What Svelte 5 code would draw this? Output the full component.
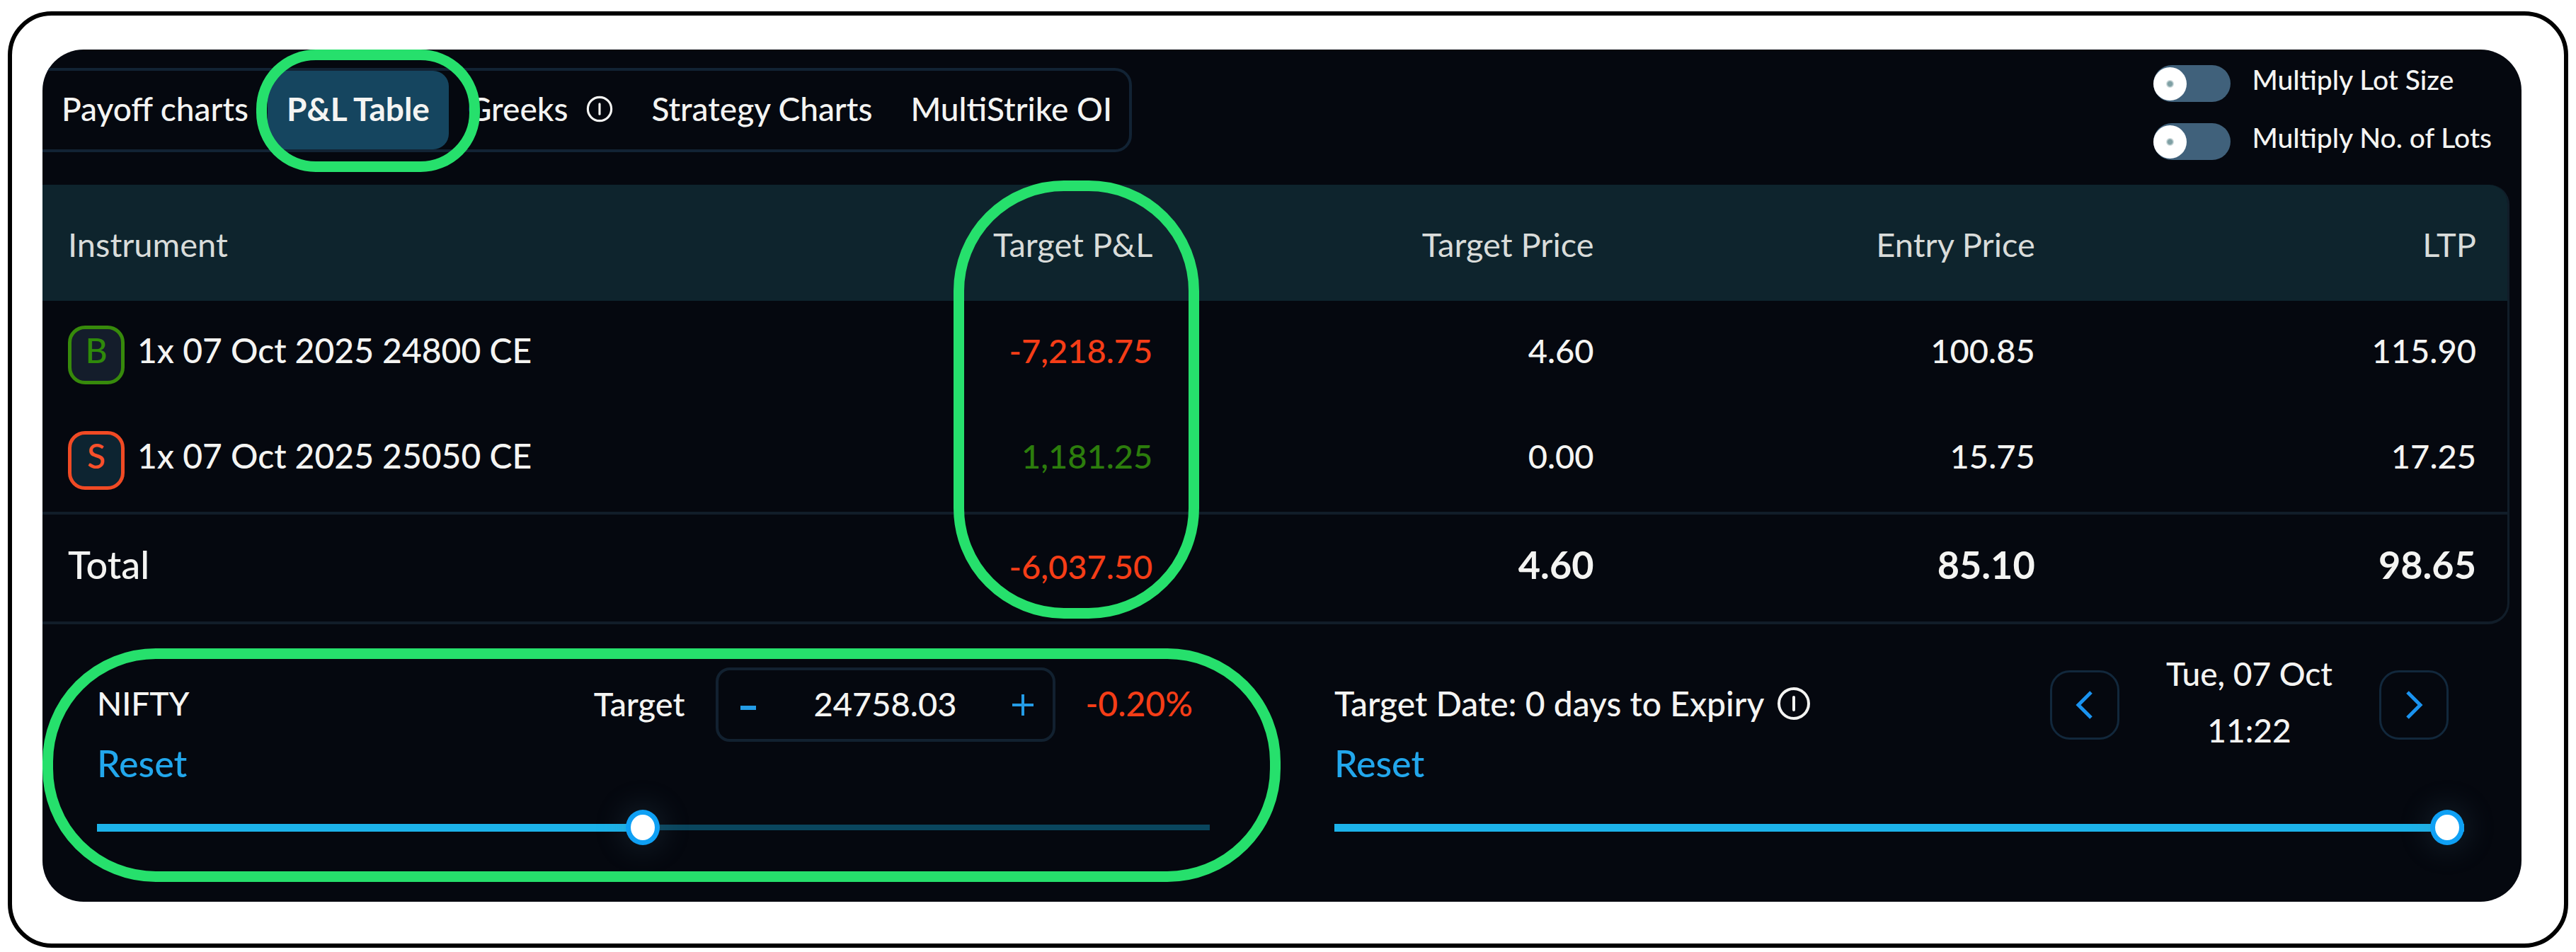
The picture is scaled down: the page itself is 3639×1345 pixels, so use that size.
<script>
	const tabs = [
		{ name: 'Payoff charts' },
		{ name: 'P&L Table' },
		{ name: 'Greeks', info: true },
		{ name: 'Strategy Charts' },
		{ name: 'MultiStrike OI' }
	];

	const legs = [
		{ side: 'B', name: '1x 07 Oct 2025 24800 CE', pnl: '-7,218.75', target: '4.60', entry: '100.85', ltp: '115.90' },
		{ side: 'S', name: '1x 07 Oct 2025 25050 CE', pnl: '1,181.25', target: '0.00', entry: '15.75', ltp: '17.25' }
	];

	let active = $state('P&L Table');
	let multiplyLotSize = $state(false);
	let multiplyLots = $state(false);
	let target = $state('24758.03');
	let spot = $state(49);
	let day = $state(100);

	function step(amount) {
		target = (Number(target) + amount).toFixed(2);
	}
</script>

{#snippet infoIcon()}
	<svg class="info" viewBox="0 0 24 24" aria-hidden="true">
		<circle cx="12" cy="12" r="10.5" />
		<path d="M12 7.5v9" />
	</svg>
{/snippet}

<main class="frame">
	<div class="panel">
		<header class="topbar">
			<nav class="tabs">
				{#each tabs as tab}
					<button class="tab" class:active={active === tab.name} onclick={() => (active = tab.name)}>
						{tab.name}
						{#if tab.info}{@render infoIcon()}{/if}
						{#if tab.name === 'P&L Table'}<span class="ring ring-tab"></span>{/if}
					</button>
				{/each}
			</nav>
			<div class="toggles">
				<label class="toggle">
					<input type="checkbox" bind:checked={multiplyLotSize}>
					<span>Multiply Lot Size</span>
				</label>
				<label class="toggle">
					<input type="checkbox" bind:checked={multiplyLots}>
					<span>Multiply No. of Lots</span>
				</label>
			</div>
		</header>

		<div class="table-wrap">
			<table>
				<thead>
					<tr>
						<th class="name" scope="col">Instrument</th>
						<th class="pnl" scope="col">Target P&amp;L<span class="ring ring-column"></span></th>
						<th scope="col">Target Price</th>
						<th scope="col">Entry Price</th>
						<th scope="col">LTP</th>
					</tr>
				</thead>
				<tbody>
					{#each legs as leg}
						<tr>
							<td class="name">
								<div class="leg">
									<span class="badge" class:sell={leg.side === 'S'}>{leg.side}</span>
									<span>{leg.name}</span>
								</div>
							</td>
							<td class={leg.pnl.startsWith('-') ? 'loss' : 'profit'}>{leg.pnl}</td>
							<td>{leg.target}</td>
							<td>{leg.entry}</td>
							<td>{leg.ltp}</td>
						</tr>
					{/each}
				</tbody>
				<tfoot>
					<tr>
						<td class="name total">Total</td>
						<td class="loss">-6,037.50</td>
						<td class="sum">4.60</td>
						<td class="sum">85.10</td>
						<td class="sum">98.65</td>
					</tr>
				</tfoot>
			</table>
		</div>

		<div class="controls">
			<section>
				<span class="ring ring-section"></span>
				<div class="row spot-row">
					<span class="text symbol">NIFTY</span>
					<div class="group">
						<label class="text" for="target">Target</label>
						<div class="stepper">
							<button aria-label="Decrease" onclick={() => step(-50)}>
								<svg viewBox="0 0 40 40"><path d="M9 24h22" stroke-width="6" /></svg>
							</button>
							<input id="target" type="text" bind:value={target}>
							<button aria-label="Increase" onclick={() => step(50)}>
								<svg viewBox="0 0 40 40"><path d="M5 20h30M20 5v30" stroke-width="4" /></svg>
							</button>
						</div>
						<span class="text change loss">-0.20%</span>
					</div>
				</div>
				<button class="reset" onclick={() => (spot = 49)}>Reset</button>
				<input class="slider" type="range" min="0" max="100" aria-label="Target price" bind:value={spot} style="--fill: {spot}%">
			</section>

			<section>
				<div class="row date-row">
					<span class="text label">Target Date: 0 days to Expiry {@render infoIcon()}</span>
					<div class="picker">
						<button class="arrow" aria-label="Previous">
							<svg viewBox="0 0 40 40"><path d="M29 2 11 20l18 18" stroke-width="5" /></svg>
						</button>
						<div class="date"><span>Tue, 07 Oct</span><span>11:22</span></div>
						<button class="arrow" aria-label="Next">
							<svg viewBox="0 0 40 40"><path d="m11 2 18 18-18 18" stroke-width="5" /></svg>
						</button>
					</div>
				</div>
				<button class="reset" onclick={() => (day = 100)}>Reset</button>
				<input class="slider" type="range" min="0" max="100" aria-label="Target date" bind:value={day} style="--fill: {day}%">
			</section>
		</div>
	</div>
</main>

<style>
	:global(body) {
		background: #fff;
	}

	.frame {
		margin: 16px 11px 8px;
		border: 6px solid #000;
		border-radius: 62px;
		padding: 48px 60px 59px 43px;
		font-family: Lato, "Noto Sans", sans-serif;
		font-size: 47px;
		font-weight: 500;
		line-height: 60px;
		color: #f4f4f2;
	}

	.panel {
		background: #05080f;
		border-radius: 58px;
		overflow: hidden;
	}

	button,
	input {
		font: inherit;
		color: inherit;
		background: none;
		border: none;
		padding: 0;
		margin: 0;
	}

	button {
		cursor: pointer;
	}

	svg {
		fill: none;
		stroke: currentColor;
	}

	.ring {
		position: absolute;
		z-index: 2;
		box-sizing: border-box;
		border: 15px solid #26e06c;
		pointer-events: none;
	}

	/* tabs and toggles */

	.topbar {
		display: flex;
		justify-content: space-between;
		align-items: flex-start;
		padding: 22px 42px 35px 0;
	}

	.tabs {
		display: flex;
		margin-top: 4px;
		border: 4px solid #122334;
		border-left: none;
		border-radius: 0 24px 24px 0;
		font-size: 46px;
	}

	.tab {
		position: relative;
		display: flex;
		align-items: center;
		gap: 26px;
		height: 111px;
		padding: 0 27px 4px;
		white-space: nowrap;
	}

	.tab:last-child {
		padding-right: 24px;
	}

	.tab.active {
		background: #15455f;
		border-radius: 22px;
		font-weight: 700;
	}

	.tab .info {
		width: 38px;
		height: 38px;
	}

	.ring-tab {
		inset: -30px -44px -32px -16px;
		border-radius: 84px;
	}

	.info {
		stroke-width: 2;
		stroke-linecap: round;
	}

	.toggles {
		display: flex;
		flex-direction: column;
		gap: 30px;
		font-size: 39px;
		line-height: 40px;
	}

	.toggle {
		display: flex;
		align-items: flex-start;
		gap: 30px;
	}

	.toggle input {
		appearance: none;
		display: flex;
		align-items: center;
		width: 109px;
		height: 52px;
		border-radius: 26px;
		background: #40617b;
	}

	.toggle input::before {
		content: "";
		width: 47px;
		height: 47px;
		border-radius: 50%;
		background: radial-gradient(circle, #7fa0a4 3px, #fff 6px);
	}

	.toggle input:checked {
		justify-content: flex-end;
	}

	/* table */

	.table-wrap {
		padding-right: 17px;
	}

	table {
		width: 100%;
		table-layout: fixed;
		border-spacing: 0;
		border-right: 3px solid #111d29;
		border-bottom: 4px solid #111d29;
		border-radius: 0 28px 30px 0;
	}

	th,
	td {
		width: 17.95%;
		padding: 35px 44px 31px 0;
		text-align: right;
		vertical-align: baseline;
	}

	.name {
		width: 28.2%;
		padding-left: 36px;
		text-align: left;
	}

	th {
		padding-top: 54px;
		padding-bottom: 50px;
		background: #0e242d;
		color: #d9dcda;
		font-weight: 400;
	}

	th:last-child {
		border-top-right-radius: 26px;
	}

	.pnl {
		position: relative;
	}

	.ring-column {
		top: -6px;
		right: -22px;
		width: 347px;
		height: 619px;
		border-radius: 156px;
	}

	.leg {
		display: flex;
		align-items: baseline;
		gap: 18px;
		font-size: 48px;
	}

	.badge {
		box-sizing: border-box;
		width: 80px;
		height: 83px;
		border: 5px solid #378a0b;
		border-radius: 24px;
		background: #141d2b;
		color: #2f8a0a;
		text-align: center;
	}

	.badge.sell {
		border-color: #f04a24;
		background: #0d2431;
		color: #f8502a;
	}

	.loss {
		color: #f53d17;
	}

	.profit {
		color: #2c7d0c;
	}

	tfoot td {
		border-top: 4px solid #111d29;
		padding-top: 41px;
		padding-bottom: 48px;
	}

	.total,
	.sum {
		font-size: 54px;
	}

	.sum {
		font-weight: 700;
	}

	/* target controls */

	.controls {
		display: grid;
		grid-template-columns: 65fr 66fr;
		gap: 176px;
		padding: 61px 81px 79px 77px;
	}

	section {
		position: relative;
		display: flex;
		flex-direction: column;
		align-items: flex-start;
	}

	.ring-section {
		inset: -27px -100px -51px -77px;
		border-radius: 160px;
	}

	.row {
		box-sizing: border-box;
		display: flex;
		justify-content: space-between;
		align-items: center;
		width: 100%;
		height: 105px;
		white-space: nowrap;
	}

	.text {
		padding-bottom: 4px;
	}

	.spot-row {
		padding-right: 24px;
	}

	.date-row {
		padding-right: 22px;
	}

	.symbol {
		font-size: 46px;
	}

	.change {
		font-size: 48px;
	}

	.group,
	.label,
	.picker {
		display: flex;
		align-items: center;
	}

	.group {
		gap: 43px;
	}

	.stepper {
		box-sizing: border-box;
		display: flex;
		width: 480px;
		height: 105px;
		border: 4px solid #122130;
		border-radius: 20px;
	}

	.stepper button {
		flex: none;
		width: 84px;
		color: #249ce6;
	}

	.stepper svg {
		display: block;
		width: 40px;
		height: 40px;
		margin: auto;
	}

	.stepper input {
		flex: 1;
		min-width: 0;
		padding-bottom: 4px;
		text-align: center;
		outline: none;
	}

	.label {
		gap: 18px;
		font-size: 48px;
	}

	.label .info {
		width: 48px;
		height: 48px;
	}

	.picker {
		gap: 66px;
	}

	.arrow {
		box-sizing: border-box;
		width: 98px;
		height: 98px;
		border: 3px solid #12283c;
		border-radius: 28px;
		color: #1a93f0;
	}

	.arrow svg {
		display: block;
		width: 40px;
		height: 40px;
		margin: auto;
	}

	.date {
		display: flex;
		flex-direction: column;
		align-items: center;
		padding-bottom: 8px;
		font-size: 46px;
		line-height: 80px;
	}

	.reset {
		font-size: 52px;
		color: #22a7ec;
	}

	.slider {
		appearance: none;
		width: 100%;
		height: 52px;
		margin-top: 35px;
		background:
			linear-gradient(#1cb3ea, #1cb3ea) left / var(--fill) 11px no-repeat,
			linear-gradient(#0a465e, #0a465e) center / 100% 8px no-repeat;
	}

	.slider::-webkit-slider-thumb {
		appearance: none;
		box-sizing: border-box;
		width: 48px;
		height: 50px;
		border: 7px solid #0fa0f4;
		border-radius: 50%;
		background: #fff;
		box-shadow: 0 0 40px 8px rgba(90, 130, 150, 0.16);
	}
</style>
